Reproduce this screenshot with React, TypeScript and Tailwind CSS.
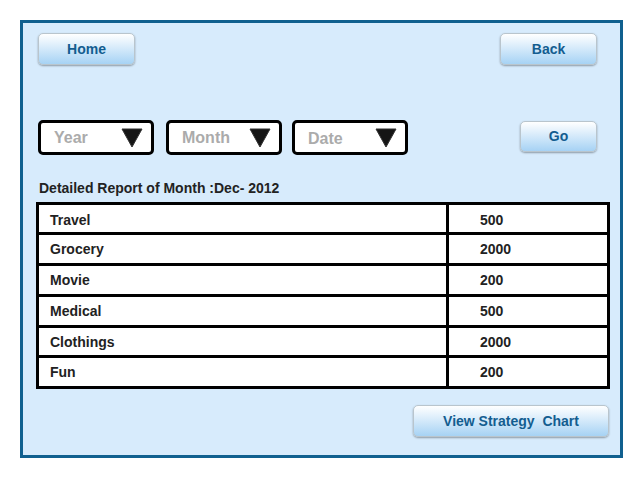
const rows = [
  { label: 'Travel', value: '500', h: 'h-[27px]', pad: 'pt-[3px]' },
  { label: 'Grocery', value: '2000', h: 'h-[31px]', pad: 'pt-[1px]' },
  { label: 'Movie', value: '200', h: 'h-[31px]', pad: '' },
  { label: 'Medical', value: '500', h: 'h-[31px]', pad: 'pt-[1px]' },
  { label: 'Clothings', value: '2000', h: 'h-[30px]', pad: 'pt-[1px]' },
  { label: 'Fun', value: '200', h: 'h-[31px]', pad: '' },
];

function GlossButton({ label, className }: { label: string; className: string }) {
  return (
    <button
      className={`flex items-center justify-center rounded-[5px] border border-[#b9c5cd] bg-gradient-to-b from-white to-[#a6d2f4] text-[14px] font-bold text-[#135d90] shadow-[0_1px_2px_rgba(0,0,0,0.35)] ${className}`}
    >
      {label}
    </button>
  );
}

function Dropdown({ label, className, textClass }: { label: string; className?: string; textClass?: string }) {
  return (
    <div
      className={`flex h-[35px] w-[116px] items-center justify-between rounded-[5px] border-[3px] border-black bg-white pl-[13px] pr-[8px] ${className ?? ''}`}
    >
      <span className={`text-[16px] font-bold text-[#ababab] ${textClass ?? ''}`}>{label}</span>
      <svg width="22" height="20" viewBox="0 0 22 20">
        <polygon points="1,1 21,1 11,19" fill="#151515" stroke="#333" strokeWidth="1" strokeLinejoin="round" />
      </svg>
    </div>
  );
}

export default function App() {
  return (
    <div className="h-[480px] w-[640px] bg-white pl-[20px] pt-[20px] font-['Liberation_Sans',Arial,sans-serif]">
      <div className="flex h-[438px] w-[603px] flex-col border-[3px] border-[#10608f] bg-[#d7ebfc]">
        <div className="mt-[10px] flex">
          <GlossButton label="Home" className="ml-[15px] h-[32px] w-[97px]" />
          <GlossButton label="Back" className="ml-auto mr-[23px] h-[32px] w-[97px]" />
        </div>

        <div className="mt-[55px] flex items-start">
          <Dropdown label="Year" className="ml-[15px]" />
          <Dropdown label="Month" className="ml-[12px]" />
          <Dropdown label="Date" className="ml-[10px]" textClass="pt-[3px]" />
          <GlossButton label="Go" className="ml-auto mr-[23px] mt-[1px] h-[31px] w-[77px]" />
        </div>

        <div className="ml-[16px] mt-[25px] text-[14px] font-bold leading-[16px] text-[#222]">
          Detailed Report of Month :Dec- 2012
        </div>

        <div className="ml-[13px] mt-[6px] w-[574px] border-[3px] border-black bg-white">
          {rows.map((r, i) => (
            <div key={r.label} className={`flex ${r.h} ${i > 0 ? 'border-t-[3px] border-black' : ''}`}>
              <div className={`flex w-[407px] items-center pl-[11px] text-[14px] font-bold text-[#222] ${r.pad}`}>
                {r.label}
              </div>
              <div
                className={`flex flex-1 items-center border-l-[3px] border-black pl-[31px] text-[14px] font-bold text-[#222] ${r.pad}`}
              >
                {r.value}
              </div>
            </div>
          ))}
        </div>

        <div className="mt-[16px] flex">
          <GlossButton label="View Strategy  Chart" className="ml-auto mr-[11px] h-[32px] w-[196px] whitespace-pre" />
        </div>
      </div>
    </div>
  );
}
